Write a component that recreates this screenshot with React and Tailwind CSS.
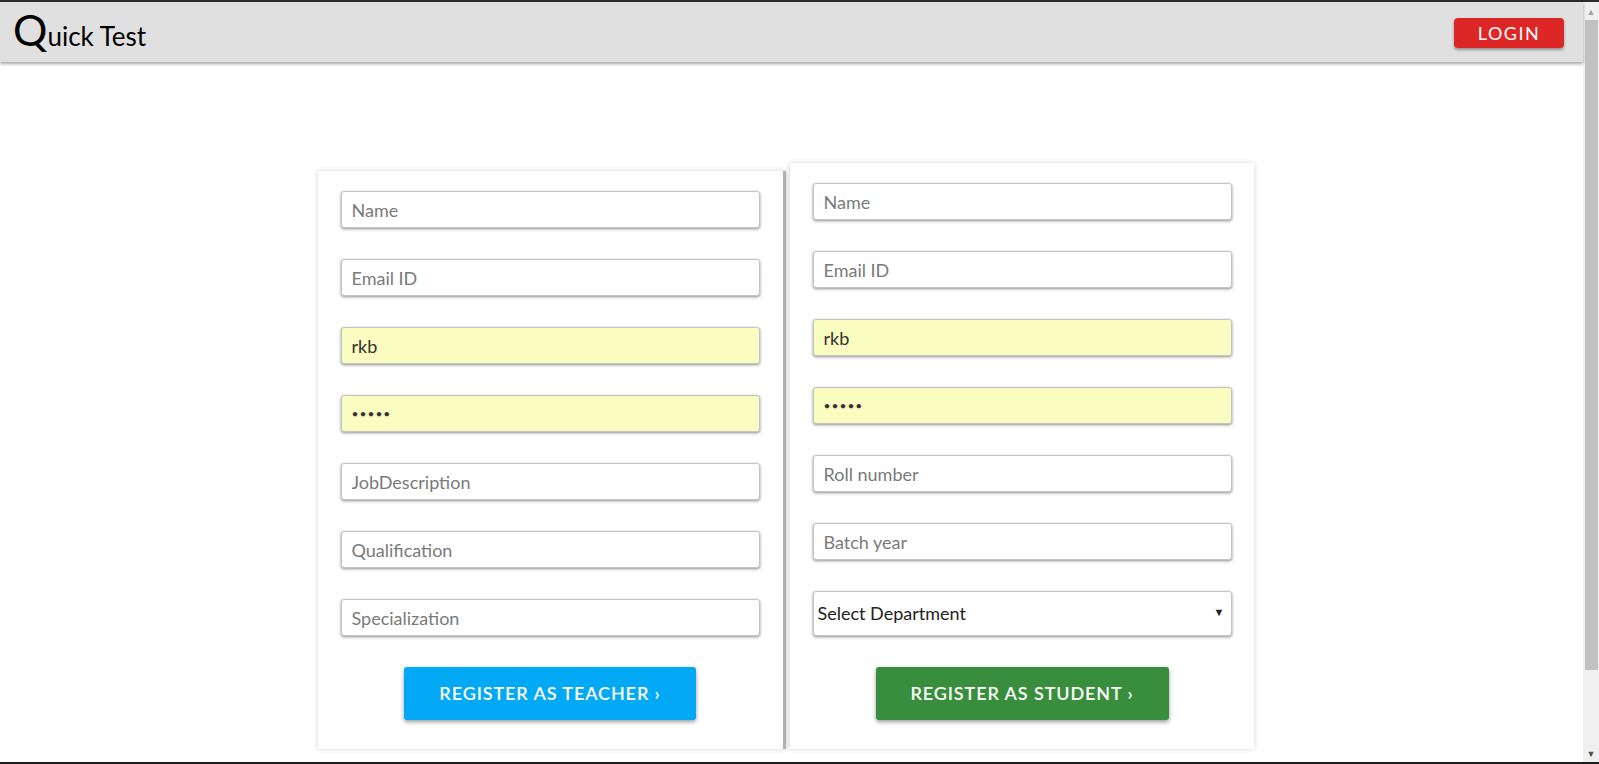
import React from 'react';

const font = { fontFamily: 'Lato, "Open Sans", sans-serif' };

const Field = ({ placeholder, value, type = 'text', filled = false, last = false }) => (
  <input
    type={type}
    placeholder={placeholder}
    defaultValue={value}
    readOnly
    className={`block w-[419px] h-[37px] rounded-[3px] border border-[#c4c4c4] px-[10px] ${type === 'password' ? 'text-[12px] tracking-[1px]' : 'text-[18px]'} text-[#333] placeholder-[#7a7a7a] outline-none shadow-[0_1px_3px_rgba(0,0,0,0.45)] ${filled ? 'bg-[#fafdc0]' : 'bg-white'} ${last ? '' : 'mb-[31px]'}`}
    style={font}
  />
);

const Scrollbar = () => (
  <div className="w-[16px] bg-[#f0f0f0] flex flex-col items-center">
    <div className="h-[18px] flex items-center justify-center text-[9px] text-[#a3a3a3] leading-none">▲</div>
    <div className="w-[13px] h-[650px] bg-[#c1c1c1]" />
    <div className="flex-1" />
    <div className="h-[18px] flex items-center justify-center text-[9px] text-[#505050] leading-none">▼</div>
  </div>
);

export default function App() {
  return (
    <div className="h-[764px] w-[1599px] flex flex-col bg-white overflow-hidden" style={font}>
      <div className="h-[2px] bg-[#2d2d2d]" />
      <div className="flex flex-1 min-h-0">
        <div className="flex-1 flex flex-col">
          {/* header */}
          <header className="h-[60px] bg-[#e0e0e0] shadow-[0_2px_3px_rgba(0,0,0,0.35)] flex items-center justify-between pl-[13px] pr-[19px] relative z-10">
            <div className="flex items-baseline text-black leading-none -mt-[6px]">
              <span className="text-[43px]">Q</span>
              <span className="text-[26px]">uick Test</span>
            </div>
            <button className="w-[110px] h-[30px] mt-[2px] rounded-[4px] bg-[#dd2727] text-white text-[18px] tracking-[1.5px] shadow-[0_2px_3px_rgba(0,0,0,0.35)]">
              LOGIN
            </button>
          </header>

          {/* forms */}
          <div className="flex-1 flex items-end justify-center gap-[4px] pb-[13px] pr-[12px]">
            <div className="bg-white w-[468px] border-r-[3px] border-[#b0b0b0] pl-[23px] pr-[23px] pt-[20px] pb-[29px] shadow-[0_0_5px_rgba(0,0,0,0.18)]">
              <Field placeholder="Name" />
              <Field placeholder="Email ID" />
              <Field value="rkb" filled />
              <Field type="password" value="abcde" filled />
              <Field placeholder="JobDescription" />
              <Field placeholder="Qualification" />
              <Field placeholder="Specialization" last />
              <div className="flex justify-center mt-[31px]">
                <button className="w-[292px] h-[53px] rounded-[3px] bg-[#03a9f4] text-white text-[18px] font-semibold tracking-[0.9px] shadow-[0_2px_4px_rgba(0,0,0,0.4)]">
                  REGISTER AS TEACHER ›
                </button>
              </div>
            </div>

            <div className="bg-white w-[464px] pl-[23px] pr-[22px] pt-[20px] pb-[29px] shadow-[0_0_5px_rgba(0,0,0,0.18)]">
              <Field placeholder="Name" />
              <Field placeholder="Email ID" />
              <Field value="rkb" filled />
              <Field type="password" value="abcde" filled />
              <Field placeholder="Roll number" />
              <Field placeholder="Batch year" />
              <div className="relative w-[419px]">
                <select
                  defaultValue=""
                  className="block w-[419px] h-[45px] appearance-none rounded-[3px] border border-[#c4c4c4] bg-white pl-[4px] text-[18px] text-[#222] outline-none shadow-[0_1px_3px_rgba(0,0,0,0.45)]"
                  style={font}
                >
                  <option value="">Select Department</option>
                </select>
                <span className="absolute right-[7px] top-[13px] text-[11px] text-[#222] pointer-events-none">▼</span>
              </div>
              <div className="flex justify-center mt-[31px]">
                <button className="w-[293px] h-[53px] rounded-[3px] bg-[#388e3c] text-white text-[18px] font-semibold tracking-[0.9px] shadow-[0_2px_4px_rgba(0,0,0,0.4)]">
                  REGISTER AS STUDENT ›
                </button>
              </div>
            </div>
          </div>
        </div>
        <Scrollbar />
      </div>
      <div className="h-[2px] bg-[#1a1a1a]" />
    </div>
  );
}
